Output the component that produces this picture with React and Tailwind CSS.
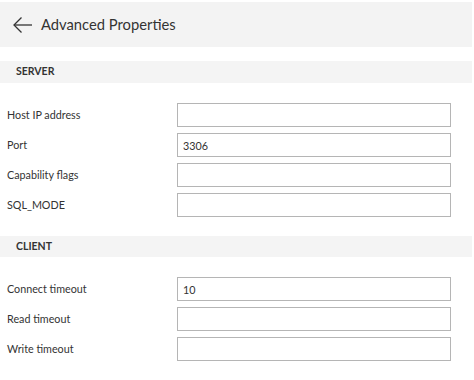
import React from 'react';

const font = { fontFamily: 'Lato, "Open Sans", "Noto Sans", sans-serif' };

const Field = ({ label, value }) => (
  <div className="flex items-center h-[24px]">
    <label className="w-[177px] pl-[7px] text-[10.75px] text-[#333]">{label}</label>
    <input
      type="text"
      defaultValue={value}
      className="w-[274px] h-[24px] border border-[#b5b5b5] bg-white px-[5px] text-[10.75px] text-[#333] outline-none"
    />
  </div>
);

const Section = ({ title, h }) => (
  <div className={`${h} bg-[#f4f4f4] flex items-center pl-[16px] text-[10.5px] font-bold text-[#333]`}>
    {title}
  </div>
);

export default function App() {
  return (
    <div className="w-[474px] h-[380px] bg-white pt-[2px] pr-[2px]" style={font}>
      {/* Header */}
      <div className="h-[45px] bg-[#f3f3f3] flex items-center">
        <button className="ml-[11px] w-[22px] h-[22px] flex items-center justify-center text-[#333]">
          <svg width="21" height="18" viewBox="0 0 21 18" fill="none" stroke="currentColor" strokeWidth="1.3">
            <path d="M20 9H2" />
            <path d="M9.5 1.5L2 9l7.5 7.5" />
          </svg>
        </button>
        <h1 className="ml-[8px] text-[14.75px] text-[#333]">Advanced Properties</h1>
      </div>

      <div className="mt-[14px]">
        <Section title="SERVER" h="h-[22px]" />
      </div>
      <div className="mt-[20px] flex flex-col gap-[6px]">
        <Field label="Host IP address" />
        <Field label="Port" value="3306" />
        <Field label="Capability flags" />
        <Field label="SQL_MODE" />
      </div>

      <div className="mt-[19px]">
        <Section title="CLIENT" h="h-[21px]" />
      </div>
      <div className="mt-[20px] flex flex-col gap-[6px]">
        <Field label="Connect timeout" value="10" />
        <Field label="Read timeout" />
        <Field label="Write timeout" />
      </div>
    </div>
  );
}
